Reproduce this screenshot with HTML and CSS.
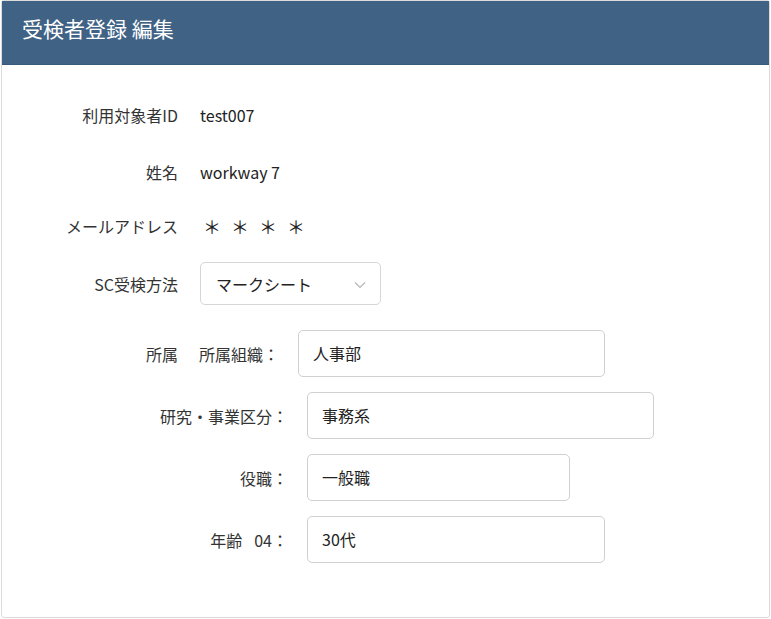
FILE: index.html
```html
<!DOCTYPE html>
<html lang="ja">
<head>
    <meta charset="UTF-8">
    <meta name="viewport" content="width=device-width, initial-scale=1.0">
    <title>受検者登録 編集</title>
    <link rel="stylesheet" href="styles.css">
</head>
<body>
    <div class="card">
        <div class="card-header">
            <h2>受検者登録 編集</h2>
        </div>
        <div class="form">
            <div class="row">
                <div class="label">利用対象者ID</div>
                <div class="value">test007</div>
            </div>
            <div class="row">
                <div class="label">姓名</div>
                <div class="value">workway 7</div>
            </div>
            <div class="row row-mail">
                <div class="label">メールアドレス</div>
                <div class="value masked">
                    <span>＊</span><span>＊</span><span>＊</span><span>＊</span>
                </div>
            </div>
            <div class="row row-select">
                <div class="label">SC受検方法</div>
                <div class="select">
                    <span>マークシート</span>
                    <svg width="12" height="8" viewBox="0 0 12 8">
                        <path d="M1 1.5 L6 6.5 L11 1.5" fill="none" stroke="#b5b5b5" stroke-width="1.1"/>
                    </svg>
                </div>
            </div>

            <div class="affil">
                <div class="row">
                    <div class="label">所属</div>
                    <div class="sub-first">所属組織：</div>
                    <input class="field field-org" type="text" value="人事部">
                </div>
                <div class="row">
                    <div class="sub-label">研究・事業区分：</div>
                    <input class="field field-div" type="text" value="事務系">
                </div>
                <div class="row">
                    <div class="sub-label">役職：</div>
                    <input class="field field-post" type="text" value="一般職">
                </div>
                <div class="row">
                    <div class="sub-label">年齢<span class="space"></span>04：</div>
                    <input class="field field-age" type="text" value="30代">
                </div>
            </div>
        </div>
    </div>
</body>
</html>
```

FILE: styles.css
```css
* {
    box-sizing: border-box;
}
body {
    font-family: "Noto Sans CJK JP", "Noto Sans", sans-serif;
    background-color: #ffffff;
    color: #222;
    margin: 0;
}
.card {
    width: 769px;
    margin-left: 1px;
    border: 1px solid #dcdcdc;
    border-radius: 3px;
    background-color: white;
}
.card-header {
    height: 64px;
    background-color: #3f6285;
    border-bottom: 1px solid #375a7b;
    display: flex;
    align-items: center;
    padding: 0 0 9px 20px;
}
.card-header h2 {
    margin: 0;
    font-size: 21px;
    font-weight: 400;
    color: white;
}
.form {
    padding: 30px 0 54px;
    display: flex;
    flex-direction: column;
}
.row {
    display: flex;
    align-items: center;
    min-height: 40px;
    font-size: 16px;
}
.row + .row {
    margin-top: 17px;
}
.form > .row-mail {
    margin-top: 14px;
}
.form > .row-select {
    margin-top: 16px;
}
.label {
    width: 176px;
    text-align: right;
    color: #333;
}
.value {
    margin-left: 22px;
}
.masked {
    margin-left: 25px;
    display: flex;
    gap: 10px;
    font-size: 18px;
    color: #222;
}
.select {
    margin-left: 22px;
    width: 181px;
    height: 43px;
    border: 1px solid #d6d6d6;
    border-radius: 5px;
    display: flex;
    align-items: center;
    justify-content: space-between;
    padding: 0 14px 0 15px;
}
.select svg {
    margin-top: 3px;
}
.affil {
    margin-top: 25px;
    display: flex;
    flex-direction: column;
    gap: 15px;
}
.affil .row + .row {
    margin-top: 0;
}
.sub-first {
    margin-left: 21px;
    width: 80px;
    color: #333;
}
.sub-label {
    width: 286px;
    text-align: right;
    color: #333;
}
.sub-label .space {
    display: inline-block;
    width: 12px;
}
.field {
    height: 47px;
    border: 1px solid #d0d0d0;
    border-radius: 5px;
    padding: 0 0 2px 14px;
    font-family: inherit;
    font-size: 16px;
    color: #222;
    background-color: white;
    margin-left: 19px;
}
.field-org {
    width: 307px;
}
.field-div {
    width: 347px;
}
.field-post {
    width: 263px;
}
.field-age {
    width: 298px;
}
```
